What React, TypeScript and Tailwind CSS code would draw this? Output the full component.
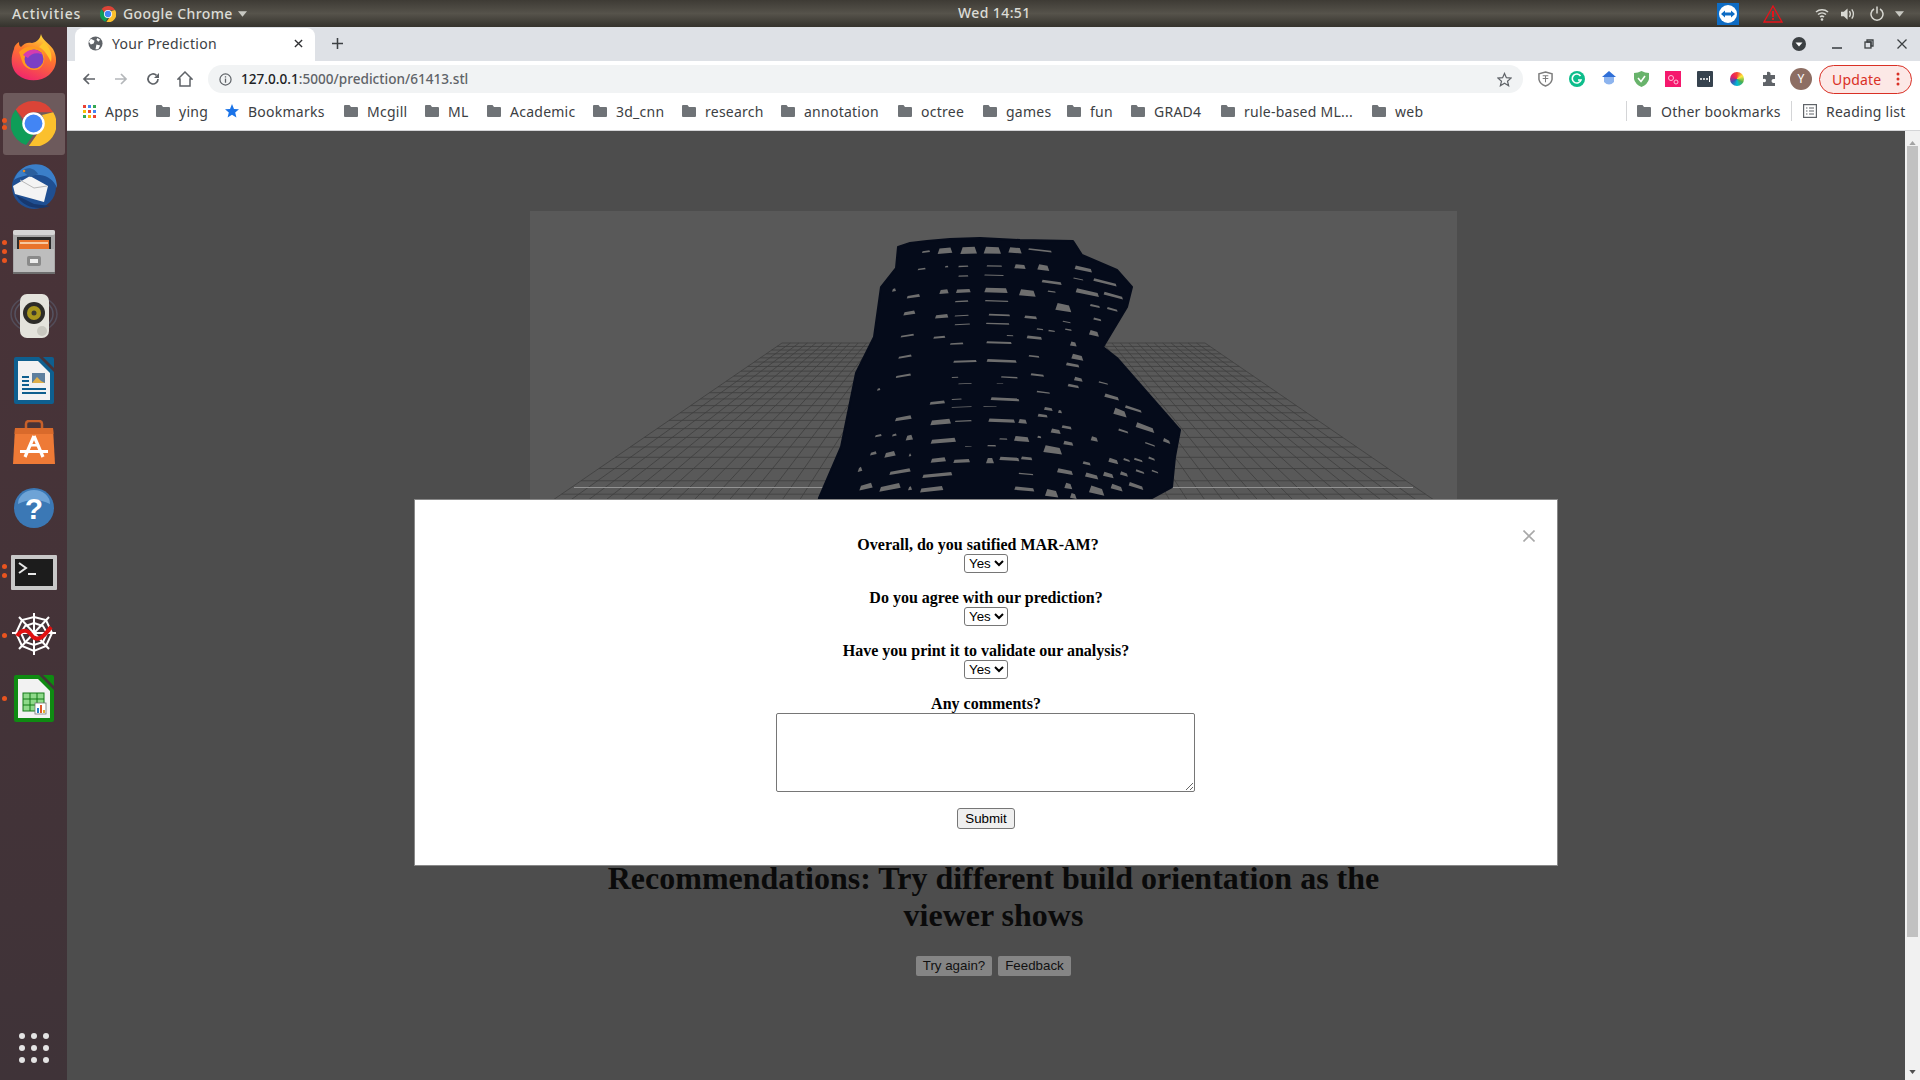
const uiFont = { fontFamily: '"Noto Sans", sans-serif' };

// bookmark bar items, widths measured from the screenshot
const bookmarks = [
  { label: "ying", w: "w-[28px]", gap: "ml-[17px]" },
  { label: "Bookmarks", w: "w-[77px]", star: true, gap: "ml-[18px]" },
  { label: "Mcgill", w: "w-[41px]", gap: "ml-[19px]" },
  { label: "ML", w: "w-[21px]", gap: "ml-[17px]" },
  { label: "Academic", w: "w-[66px]", gap: "ml-[18px]" },
  { label: "3d_cnn", w: "w-[48px]", gap: "ml-[17px]" },
  { label: "research", w: "w-[58px]", gap: "ml-[18px]" },
  { label: "annotation", w: "w-[76px]", gap: "ml-[18px]" },
  { label: "octree", w: "w-[44px]", gap: "ml-[18px]" },
  { label: "games", w: "w-[44px]", gap: "ml-[18px]" },
  { label: "fun", w: "w-[24px]", gap: "ml-[17px]" },
  { label: "GRAD4", w: "w-[50px]", gap: "ml-[17px]" },
  { label: "rule-based ML...", w: "w-[111px]", gap: "ml-[17px]" },
  { label: "web", w: "w-[30px]", gap: "ml-[17px]" },
];

// gaps in the mesh, read off the viewer: cx, cy, w, h
const holes = [
  [228,65,24,5],[285,62,44,16],[356,61,50,20],[427,61,52,20],[495,61,40,16],[570,61,70,5],
  [215,117,24,5],[290,110,10,4],[340,109,30,4],[433,108,46,4],[510,110,34,12],[580,113,36,16],[700,117,52,10],
  [340,138,30,4],[432,136,58,3],[605,157,60,8],[685,147,30,3],[765,157,70,8],
  [132,180,12,8],[190,199,40,8],[282,185,28,12],[340,183,44,10],[438,181,70,14],[532,189,50,18],[605,185,24,4],[712,188,70,12],[790,197,58,8],
  [335,214,40,4],[440,213,70,4],[640,233,48,20],[735,228,30,6],[787,238,32,6],
  [178,249,36,10],[275,259,40,10],[335,257,42,3],[448,255,64,5],[542,262,38,8],
  [337,283,46,3],[443,281,70,4],[650,276,24,3],[742,268,24,6],
  [570,298,20,4],[605,303,20,4],[655,299,20,4],[732,310,30,14],
  [172,317,40,5],[268,322,36,6],[480,317,20,3],[553,323,46,8],
  [320,341,40,5],[447,338,76,6],[670,342,20,12],
  [165,380,40,6],[345,394,70,6],[455,393,90,8],[552,379,32,5],[682,382,36,14],[668,405,40,8],
  [160,437,46,6],[315,442,20,3],[478,442,50,4],[562,435,40,6],[670,468,34,8],[685,448,26,10],
  [345,461,40,2],[450,461,20,2],[760,459,28,4],
  [86,478,10,6],[262,518,46,8],[320,508,30,3],[465,508,86,8],[580,487,40,4],
  [335,531,60,2],[420,530,40,2],[595,537,26,8],[785,501,44,10],[850,537,50,8],[810,548,40,18],
  [160,565,50,10],[272,576,62,14],[340,573,50,4],[455,572,80,10],[518,574,26,12],[578,557,30,8],[630,545,12,8],
  [85,617,20,6],[133,615,14,6],[178,623,22,14],[280,632,76,12],[460,627,24,4],[515,627,46,14],[568,621,12,6],[617,604,30,12],[650,592,30,8],[733,627,22,12],[885,593,56,14],[820,603,30,6],
  [355,649,20,2],[425,647,26,4],[608,660,56,20],[655,640,30,10],
  [120,673,34,14],[70,670,20,8],[180,675,8,8],[265,690,46,12],[335,693,50,10],[420,692,24,16],[478,687,60,10],[530,685,34,8],[710,700,24,8],[790,693,30,12],[830,690,20,6],[865,690,26,6],[905,686,20,6],[950,633,22,10],[900,643,30,4],
  [30,718,14,12],[150,725,64,10],[262,735,90,10],[528,732,44,4],[645,725,48,12],[725,738,40,12],[775,735,32,12],[822,732,24,10],[870,725,26,6],[915,725,20,4],
  [48,770,40,14],[120,772,64,14],[180,775,12,10],[245,778,70,12],[523,777,60,10],[605,790,40,20],[655,768,24,16],[670,798,20,14],[740,782,46,20],[800,773,36,14],[858,768,44,10],
];

function holePoints([cx, cy, w, h]: number[]) {
  const slope = (cx - 400) / 1500;
  const dy = (slope * w) / 2;
  const t = h * 0.35;
  return [
    [cx - w / 2 + t, cy - dy - h / 2],
    [cx + w / 2 - t, cy + dy - h / 2],
    [cx + w / 2, cy + dy + h / 2],
    [cx - w / 2, cy - dy + h / 2],
  ]
    .map((p) => p.join(","))
    .join(" ");
}

function Viewer() {
  const vy = 198;
  const cx = 993.5;
  const k = 211.5 / (343 - vy);
  const bottom = 620;
  const rows = [];
  for (let i = 0; i <= 45; i++) {
    const y = vy + 1 / (1 / (343 - vy) - i * 0.00016);
    if (y > 0 && y < bottom) rows.push(y);
  }
  const cols = [];
  for (let i = -25; i <= 25; i++) cols.push(i / 25);
  return (
    <svg viewBox="530 211 927 620" className="block w-full h-full">
      {rows.map((y, i) => (
        <line key={i} x1={cx - (y - vy) * k} x2={cx + (y - vy) * k} y1={y} y2={y} stroke="#3f3f3f" strokeWidth="0.8" />
      ))}
      {cols.map((c, i) => (
        <line key={i} x1={cx + c * 211.5} y1={343} x2={cx + c * (bottom - vy) * k} y2={bottom} stroke="#3f3f3f" strokeWidth="0.8" />
      ))}
      <line x1="574" x2="1413" y1="487.5" y2="487.5" stroke="#929292" strokeWidth="1" />
      <path
        d="M898 247 L910 243 L927 241 L950 239 L980 238 L1020 240 L1073 241 L1082 255 L1117 270 L1132 287 L1127 307 L1103 347 L1117 358 L1180 430 L1175 457 L1172 487 L1150 499 L1150 620 L819 620 L819 498 L841 447 L856 373 L874 337 L881 287 L896 268 Z"
        fill="#050b1a"
        stroke="#050b1a"
        strokeWidth="2"
        strokeLinejoin="round"
      />
      <g transform="translate(850 230) scale(0.3333)">
        {holes.map((h, i) => (
          <polygon key={i} points={holePoints(h)} fill="#6e6e6e" />
        ))}
      </g>
    </svg>
  );
}

function Firefox() {
  return (
    <svg viewBox="0 0 46 47" className="w-[46px] h-[47px]">
      <defs>
        <linearGradient id="ff" x1="0.7" y1="0" x2="0.3" y2="1">
          <stop offset="0" stopColor="#ffe03a" />
          <stop offset="0.4" stopColor="#ff7a2b" />
          <stop offset="1" stopColor="#f0246e" />
        </linearGradient>
      </defs>
      <path d="M30 0 C31 6 38 9 42 15 C47 24 46 34 38 41 C30 48 15 48 7 41 C0 35 -1 25 3 15 C3 12 5 10 8 8 C8 10 8 12 10 13 C13 9 17 8 21 9 C26 8 29 5 30 0 Z" fill="url(#ff)" />
      <path d="M33 8 C38 12 42 20 40 28 C37 22 34 16 28 13 Z" fill="#ffc52c" />
      <path d="M8 18 C14 12 22 11 29 15 C35 20 35 30 28 35 C21 38 13 34 11 27 Z" fill="#ff9a1f" />
      <circle cx="23" cy="25" r="9.5" fill="#7b3fc4" />
      <path d="M12 21 C17 14 28 14 32 21 C27 18 20 19 17 24 Z" fill="#d43cb0" />
    </svg>
  );
}

function ChromeLogo({ size }: { size: string }) {
  return (
    <svg viewBox="0 0 48 48" className={size}>
      <path d="M24 0 A24 24 0 0 1 45 12 L24 12 A12 12 0 0 0 13 19 L5 9 A24 24 0 0 1 24 0 Z" fill="#db4437" />
      <path d="M5 9 L17 31 A12 12 0 0 0 24 36 L16 47 A24 24 0 0 1 5 9 Z" fill="#0f9d58" />
      <path d="M45 12 A24 24 0 0 1 19 48 L31 31 A12 12 0 0 0 33 15 Z" fill="#fbc02d" />
      <circle cx="24" cy="24" r="12" fill="#fff" />
      <circle cx="24" cy="24" r="9.5" fill="#4285f4" />
    </svg>
  );
}

function Thunderbird() {
  return (
    <svg viewBox="0 0 48 48" className="w-[48px] h-[48px]">
      <circle cx="24" cy="25" r="22" fill="#1f4f92" />
      <path d="M4 18 C8 6 20 0 32 3 C42 6 47 16 47 26 C44 18 38 14 30 13 C20 12 10 14 4 18 Z" fill="#3b7fc9" />
      <path d="M3 24 L20 14 L38 24 L34 40 L5 32 Z" fill="#f4f4f4" />
      <path d="M10 18 L24 26 L37 24" fill="none" stroke="#b8b8b8" strokeWidth="1" />
      <path d="M12 9 C17 4 25 6 28 12 L20 15 Z" fill="#2a5f9e" />
      <circle cx="14" cy="9" r="1.3" fill="#e08a2a" />
      <path d="M6 33 L24 42 L40 44 C30 48 14 47 6 33 Z" fill="#17386e" />
    </svg>
  );
}

function Cabinet() {
  return (
    <svg viewBox="0 0 42 44" className="w-[42px] h-[44px]">
      <rect x="0" y="0" width="42" height="44" rx="2" fill="#a8a8a8" />
      <rect x="0" y="0" width="42" height="5" rx="2" fill="#d6d6d6" />
      <rect x="4" y="7" width="34" height="12" fill="#2c2c2c" />
      <rect x="6" y="10" width="30" height="9" fill="#e9742b" />
      <rect x="7" y="12" width="28" height="2" fill="#f6c9a0" />
      <rect x="1" y="19" width="40" height="23" fill="#bdbdbd" />
      <rect x="14" y="26" width="14" height="10" rx="2" fill="#8a8a8a" />
      <rect x="17" y="29" width="8" height="4" fill="#ededed" />
      <rect x="0" y="42" width="42" height="2" fill="#6e6e6e" />
    </svg>
  );
}

function Speaker() {
  return (
    <svg viewBox="0 0 48 44" className="w-[48px] h-[44px]">
      <ellipse cx="24" cy="20" rx="23" ry="18" fill="none" stroke="#5a5f72" strokeWidth="1.5" opacity="0.6" />
      <ellipse cx="24" cy="20" rx="19" ry="15" fill="none" stroke="#5a5f72" strokeWidth="1.5" opacity="0.7" />
      <rect x="10" y="0" width="29" height="44" rx="7" fill="#e4e3dc" />
      <circle cx="24" cy="19" r="11" fill="#2d2c28" />
      <circle cx="24" cy="19" r="7" fill="#a8961c" />
      <circle cx="24" cy="19" r="2.5" fill="#3a3a30" />
      <circle cx="32" cy="37" r="5" fill="#c9c8c0" />
    </svg>
  );
}

function DocIcon({ dark, children }: { dark: string; children: React.ReactNode }) {
  return (
    <svg viewBox="0 0 40 47" className="w-[40px] h-[47px]">
      <path d="M2 0 H25 L40 15 V45 Q40 47 38 47 H2 Q0 47 0 45 V2 Q0 0 2 0 Z" fill={dark} />
      <path d="M4 4 H24 L36 16 V43 H4 Z" fill="#f2f2f2" />
      <path d="M29 0 H38 Q40 0 40 2 V11 Z" fill={dark} />
      {children}
    </svg>
  );
}

function Bag() {
  return (
    <svg viewBox="0 0 42 44" className="w-[42px] h-[44px]">
      <path d="M13 9 V4 Q13 1 16 1 H26 Q29 1 29 4 V9" fill="none" stroke="#c7602a" strokeWidth="2.5" />
      <path d="M2 8 H40 L42 44 H0 Z" fill="#ee7a36" />
      <path d="M2 8 H40 L40.5 14 H1.5 Z" fill="#d96a2b" />
      <path d="M21 16 L30 37 M21 16 L12 37" stroke="#fff" strokeWidth="3.2" fill="none" />
      <rect x="7" y="30" width="28" height="3" fill="#fff" />
      <rect x="16" y="24" width="10" height="2.5" fill="#fff" />
    </svg>
  );
}

function Help() {
  return (
    <svg viewBox="0 0 40 40" className="w-[40px] h-[40px]">
      <circle cx="20" cy="20" r="20" fill="#3b78b5" />
      <path d="M4 16 A16 14 0 0 1 36 16 Q20 8 4 16 Z" fill="#6ea3d6" />
      <text x="20" y="31" textAnchor="middle" fontSize="30" fontWeight="700" fill="#fff" fontFamily="Liberation Sans, sans-serif">?</text>
    </svg>
  );
}

function Terminal() {
  return (
    <svg viewBox="0 0 46 35" className="w-[46px] h-[35px]">
      <rect width="46" height="35" rx="1" fill="#c8c8c8" />
      <rect x="4" y="4" width="38" height="27" fill="#1c1c1c" />
      <path d="M8 8 L15 13 L8 18" fill="none" stroke="#e8e8e8" strokeWidth="2" />
      <rect x="17" y="18" width="8" height="2" fill="#e8e8e8" />
    </svg>
  );
}

function Web() {
  const pts = [[23,2],[38,6],[45,22],[38,38],[23,44],[8,38],[1,22],[8,6]];
  const inner = [[23,12],[32,15],[36,22],[32,31],[23,34],[14,31],[10,22],[14,15]];
  return (
    <svg viewBox="0 0 46 46" className="w-[46px] h-[46px]">
      <g stroke="#fff" strokeWidth="2" fill="none">
        {pts.map((p, i) => (
          <line key={i} x1="23" y1="22" x2={p[0]} y2={p[1]} />
        ))}
        <polygon points={inner.map((p) => p.join(",")).join(" ")} />
        <polygon points="23,6 35,9 41,22 35,35 23,40 11,35 5,22 11,9" />
      </g>
      <path d="M6 25 C12 16 18 20 22 26 C28 31 34 24 40 16" fill="none" stroke="#e01010" strokeWidth="4" />
    </svg>
  );
}

function GlobeIcon() {
  return (
    <svg viewBox="0 0 16 16" className="w-[15px] h-[15px]">
      <circle cx="8" cy="8" r="7.5" fill="#5f6368" />
      <path d="M3 3 L7 5 L6 8 L3 9 L1 6 Z M9 9 L13 10 L11 14 L8 14 Z M10 2 L13 4 L11 6 L9 4 Z" fill="#fff" />
    </svg>
  );
}

function Folder({ color = "#6f7377" }: { color?: string }) {
  return (
    <svg viewBox="0 0 14 12" className="w-[14px] h-[12px] shrink-0">
      <path d="M1 0 H5.5 L7 2 H13 Q14 2 14 3 V11 Q14 12 13 12 H1 Q0 12 0 11 V1 Q0 0 1 0 Z" fill={color} />
    </svg>
  );
}

function AppsGrid() {
  const colors = ["#ea4335", "#4285f4", "#34a853", "#fbbc05", "#ea4335", "#4285f4", "#34a853", "#fbbc05", "#ea4335"];
  return (
    <div className="grid grid-cols-3 gap-[2px] w-[13px] shrink-0">
      {colors.map((c, i) => (
        <svg key={i} viewBox="0 0 3 3" className="w-[3px] h-[3px]">
          <rect width="3" height="3" fill={c} />
        </svg>
      ))}
    </div>
  );
}

function TopBar() {
  return (
    <div className="h-[27px] shrink-0 flex items-center bg-gradient-to-b from-[#3e3b35] via-[#56534b] to-[#35332d] text-[#dcdcd6] text-[14px] font-medium tracking-[0.4px] relative" style={uiFont}>
      <span className="ml-[12px] w-[88px] tracking-[0.9px]">Activities</span>
      <ChromeLogo size="w-[16px] h-[16px]" />
      <span className="ml-[7px] w-[109px] whitespace-nowrap">Google Chrome</span>
      <svg viewBox="0 0 10 6" className="w-[9px] h-[6px] ml-[6px]"><path d="M0 0 H10 L5 6 Z" fill="#c8c8c2" /></svg>
      <span className="absolute left-[958px] top-[2px] whitespace-nowrap">Wed 14:51</span>
      <div className="ml-auto flex items-center">
        <svg viewBox="0 0 22 22" className="w-[22px] h-[22px]">
          <rect width="22" height="22" fill="#0e6cc4" />
          <circle cx="11" cy="11" r="9" fill="#fff" />
          <path d="M4 11 L8 7.5 V9.5 H14 V7.5 L18 11 L14 14.5 V12.5 H8 V14.5 Z" fill="#0e6cc4" />
        </svg>
        <svg viewBox="0 0 20 18" className="w-[20px] h-[18px] ml-[24px]">
          <path d="M10 1 L19 17 H1 Z" fill="none" stroke="#e8121a" strokeWidth="1.3" />
          <rect x="9" y="6" width="2" height="6" fill="#e8121a" />
          <rect x="9" y="13" width="2" height="2" fill="#e8121a" />
        </svg>
        <svg viewBox="0 0 14 14" className="w-[14px] h-[14px] ml-[32px]">
          <path d="M1 5 A9 9 0 0 1 13 5 M3 7.5 A6 6 0 0 1 11 7.5 M5 10 A3 3 0 0 1 9 10" fill="none" stroke="#d8d8d2" strokeWidth="1.5" />
          <circle cx="7" cy="12.5" r="1.3" fill="#d8d8d2" />
        </svg>
        <svg viewBox="0 0 16 14" className="w-[15px] h-[14px] ml-[12px]">
          <path d="M0 4.5 H3 L7 1 V13 L3 9.5 H0 Z" fill="#d8d8d2" />
          <path d="M9 4 Q11 7 9 10 M11.5 2 Q15 7 11.5 12" fill="none" stroke="#d8d8d2" strokeWidth="1.4" />
        </svg>
        <svg viewBox="0 0 14 15" className="w-[14px] h-[15px] ml-[14px]">
          <path d="M4 3 A6 6 0 1 0 10 3" fill="none" stroke="#d8d8d2" strokeWidth="1.5" />
          <line x1="7" y1="0.5" x2="7" y2="7.5" stroke="#d8d8d2" strokeWidth="1.5" />
        </svg>
        <svg viewBox="0 0 10 6" className="w-[9px] h-[6px] ml-[11px] mr-[16px]"><path d="M0 0 H10 L5 6 Z" fill="#c8c8c2" /></svg>
      </div>
    </div>
  );
}

function Dock() {
  return (
    <div className="w-[67px] shrink-0 flex flex-col items-center bg-gradient-to-b from-[#4b3338] to-[#3f3338] relative">
      <div className="h-[55px] mt-[3px] flex items-center"><Firefox /></div>
      <div className="w-[62px] h-[62px] mt-[8px] pb-[2px] rounded-[3px] bg-[#6d5a5c] flex items-center justify-center"><ChromeLogo size="w-[45px] h-[45px]" /></div>
      <div className="mt-[7px]"><Thunderbird /></div>
      <div className="mt-[20px]"><Cabinet /></div>
      <div className="mt-[20px]"><Speaker /></div>
      <div className="mt-[19px]">
        <DocIcon dark="#0e5f8f">
          <path d="M8 20 H15 M8 24 H15 M8 28 H15 M8 32 H32 M8 36 H32" stroke="#0e5f8f" strokeWidth="2" />
          <rect x="18" y="16" width="13" height="10" fill="#5d7f9e" />
          <path d="M18 26 L23 20 L27 24 L31 26 Z" fill="#e0b04a" />
        </DocIcon>
      </div>
      <div className="mt-[16px]"><Bag /></div>
      <div className="mt-[24px]"><Help /></div>
      <div className="mt-[27px]"><Terminal /></div>
      <div className="mt-[21px]"><Web /></div>
      <div className="mt-[18px]">
        <DocIcon dark="#0f8a12">
          <rect x="9" y="18" width="21" height="18" fill="#8fd98a" stroke="#137a16" strokeWidth="1" />
          <path d="M9 24 H30 M9 30 H30 M16 18 V36 M23 18 V36" stroke="#137a16" strokeWidth="1" />
          <rect x="21" y="28" width="11" height="11" fill="#fff" stroke="#777" strokeWidth="0.8" />
          <rect x="23" y="33" width="2" height="5" fill="#2a7fc9" />
          <rect x="26" y="30" width="2" height="8" fill="#e0582a" />
          <rect x="29" y="35" width="2" height="3" fill="#e0b030" />
        </DocIcon>
      </div>
      <div className="mt-auto mb-[17px] grid grid-cols-3 gap-x-[6px] gap-y-[6px]">
        {[0, 1, 2, 3, 4, 5, 6, 7, 8].map((i) => (
          <div key={i} className="w-[6px] h-[6px] rounded-full bg-[#e4e4e4]" />
        ))}
      </div>
      {[[120], [127], [242], [251], [260], [566], [575], [635], [698]].map(([y]) => (
        <div key={y} className="absolute left-[2px] w-[5px] h-[5px] rounded-full bg-[#e9541f]" style={{ top: y - 27 - 2 }} />
      ))}
    </div>
  );
}

function TabStrip() {
  return (
    <div className="h-[34px] shrink-0 bg-[#dee1e6] flex items-end relative text-[#3c4043]" style={uiFont}>
      <div className="ml-[8px] w-[240px] h-[33px] bg-white rounded-t-[8px] flex items-center pl-[13px] pb-[3px]">
        <GlobeIcon />
        <span className="ml-[9px] text-[14px] tracking-[0.3px] w-[182px] whitespace-nowrap">Your Prediction</span>
        <svg viewBox="0 0 10 10" className="w-[9px] h-[9px]"><path d="M1 1 L9 9 M9 1 L1 9" stroke="#303134" strokeWidth="1.5" /></svg>
      </div>
      <svg viewBox="0 0 10 10" className="w-[11px] h-[11px] ml-[17px] mb-[12px]"><path d="M5 0 V10 M0 5 H10" stroke="#3c4043" strokeWidth="1.4" /></svg>
      <div className="ml-auto flex items-center h-full">
        <svg viewBox="0 0 14 14" className="w-[14px] h-[14px]">
          <circle cx="7" cy="7" r="7" fill="#3c4043" />
          <path d="M3.5 5.5 H10.5 L7 9.5 Z" fill="#fff" />
        </svg>
        <div className="w-[10px] h-[2px] bg-[#5f6368] ml-[26px] mt-[7px]" />
        <svg viewBox="0 0 10 10" className="w-[10px] h-[10px] ml-[22px]">
          <path d="M3 1 H9 V7 H7 V3 H3 Z" fill="none" stroke="#3c4043" strokeWidth="1.3" />
          <rect x="1" y="3" width="6" height="6" fill="none" stroke="#3c4043" strokeWidth="1.3" />
        </svg>
        <svg viewBox="0 0 10 10" className="w-[10px] h-[10px] ml-[23px] mr-[13px]"><path d="M0.5 0.5 L9.5 9.5 M9.5 0.5 L0.5 9.5" stroke="#3c4043" strokeWidth="1.3" /></svg>
      </div>
    </div>
  );
}

function Toolbar() {
  return (
    <div className="h-[36px] shrink-0 bg-white flex items-center relative" style={uiFont}>
      <svg viewBox="0 0 14 14" className="w-[14px] h-[14px] ml-[15px]"><path d="M13 7 H2 M7 2 L2 7 L7 12" fill="none" stroke="#5f6368" strokeWidth="1.7" /></svg>
      <svg viewBox="0 0 14 14" className="w-[14px] h-[14px] ml-[18px]"><path d="M1 7 H12 M7 2 L12 7 L7 12" fill="none" stroke="#b4b7ba" strokeWidth="1.7" /></svg>
      <svg viewBox="0 0 14 14" className="w-[14px] h-[14px] ml-[18px]">
        <path d="M12 7 A5 5 0 1 1 10.5 3.4" fill="none" stroke="#5f6368" strokeWidth="1.7" />
        <path d="M13 1 V6 H8 Z" fill="#5f6368" />
      </svg>
      <svg viewBox="0 0 16 16" className="w-[16px] h-[16px] ml-[17px]"><path d="M8 1 L15 8 H13 V15 H3 V8 H1 Z" fill="none" stroke="#5f6368" strokeWidth="1.5" /></svg>
      <div className="ml-[15px] w-[1315px] h-[28px] rounded-full bg-[#f1f3f4] flex items-center pl-[11px] pr-[11px]">
        <svg viewBox="0 0 14 14" className="w-[13px] h-[13px]">
          <circle cx="7" cy="7" r="6" fill="none" stroke="#5f6368" strokeWidth="1.3" />
          <rect x="6.3" y="6" width="1.4" height="4.5" fill="#5f6368" />
          <rect x="6.3" y="3.5" width="1.4" height="1.4" fill="#5f6368" />
        </svg>
        <span className="ml-[9px] text-[13.6px] text-[#5f6368] whitespace-nowrap font-medium"><span className="text-[#202124]">127.0.0.1</span>:5000/prediction/61413.stl</span>
        <svg viewBox="0 0 16 16" className="w-[15px] h-[15px] ml-auto"><path d="M8 1.5 L10 6 L15 6.5 L11.2 9.8 L12.4 14.6 L8 12 L3.6 14.6 L4.8 9.8 L1 6.5 L6 6 Z" fill="none" stroke="#5f6368" strokeWidth="1.3" /></svg>
      </div>
      <svg viewBox="0 0 16 17" className="w-[15px] h-[16px] ml-[15px]">
        <path d="M8 1 L15 3 V9 Q14 14 8 16 Q2 14 1 9 V3 Z" fill="none" stroke="#7d7d7d" strokeWidth="1.6" />
        <path d="M5 5 H11 M8 5 V12 M5 8 H11" stroke="#7d7d7d" strokeWidth="1.1" />
      </svg>
      <svg viewBox="0 0 16 16" className="w-[16px] h-[16px] ml-[16px]">
        <circle cx="8" cy="8" r="8" fill="#0dbd8b" />
        <path d="M11.5 5 A4.5 4.5 0 1 0 12 9 H9" fill="none" stroke="#fff" strokeWidth="1.6" />
      </svg>
      <svg viewBox="0 0 14 16" className="w-[14px] h-[16px] ml-[17px]">
        <path d="M7 0 L14 6 H0 Z" fill="#2f6fd8" />
        <path d="M2 6 H12 V11 Q7 16 2 11 Z" fill="#8db4ee" />
      </svg>
      <svg viewBox="0 0 15 16" className="w-[15px] h-[16px] ml-[18px]">
        <path d="M0 2 Q4 2 7.5 0 Q11 2 15 2 V8 Q14 13 7.5 16 Q1 13 0 8 Z" fill="#68b36b" />
        <path d="M4 7 L7 10.5 L11 5" fill="none" stroke="#fff" strokeWidth="1.6" />
      </svg>
      <svg viewBox="0 0 16 16" className="w-[16px] h-[16px] ml-[16px]">
        <rect width="16" height="16" fill="#f5186d" />
        <circle cx="6" cy="7" r="2.5" fill="none" stroke="#ffc2d9" strokeWidth="1" />
        <circle cx="11" cy="11" r="2" fill="none" stroke="#ffc2d9" strokeWidth="1" />
      </svg>
      <svg viewBox="0 0 16 16" className="w-[16px] h-[16px] ml-[16px]">
        <rect width="16" height="16" rx="1" fill="#36424e" />
        <circle cx="4" cy="8" r="1" fill="#fff" />
        <circle cx="7" cy="8" r="1" fill="#fff" />
        <circle cx="10" cy="8" r="1" fill="#fff" />
        <rect x="12" y="5" width="1" height="6" fill="#fff" />
      </svg>
      <div className="w-[14px] h-[14px] ml-[17px] rounded-full bg-[conic-gradient(#f44336,#ffeb3b,#4caf50,#00bcd4,#3f51b5,#e91e63,#f44336)]" />
      <svg viewBox="0 0 16 16" className="w-[16px] h-[16px] ml-[17px]">
        <path d="M6 1 Q8 0 9.5 2 V4 H14 V8 H12.5 Q10.5 8 10.5 10 Q10.5 12 12.5 12 H14 V15 H2 V11 Q5 12 5 9.5 Q5 7 2 8 V4 H6 Z" fill="#5f6368" />
      </svg>
      <div className="w-[22px] h-[22px] ml-[13px] rounded-full bg-[#8d6e63] text-white text-[12px] flex items-center justify-center">Y</div>
      <div className="w-[93px] h-[29px] ml-[7px] rounded-full border border-[#d93025] bg-[#fce8e6] flex items-center pl-[12px] text-[14px] tracking-[0.2px] text-[#d93025]">
        Update
        <svg viewBox="0 0 4 14" className="w-[4px] h-[14px] ml-[15px]">
          <circle cx="2" cy="2" r="1.5" fill="#d93025" />
          <circle cx="2" cy="7" r="1.5" fill="#d93025" />
          <circle cx="2" cy="12" r="1.5" fill="#d93025" />
        </svg>
      </div>
    </div>
  );
}

function BookmarksBar() {
  return (
    <div className="h-[34px] shrink-0 bg-white border-b border-[#d4d5d7] flex items-center pb-[5px] text-[14px] tracking-[0.25px] text-[#3c4043]" style={uiFont}>
      <div className="ml-[16px]"><AppsGrid /></div>
      <span className="ml-[9px] w-[34px]">Apps</span>
      {bookmarks.map((b) => (
        <div key={b.label} className={"flex items-center " + b.gap}>
          {b.star ? (
            <svg viewBox="0 0 14 14" className="w-[14px] h-[14px]"><path d="M7 0 L9 5 L14 5.3 L10.2 8.5 L11.4 13.5 L7 10.8 L2.6 13.5 L3.8 8.5 L0 5.3 L5 5 Z" fill="#1a73e8" /></svg>
          ) : (
            <Folder />
          )}
          <span className={"ml-[9px] whitespace-nowrap " + b.w}>{b.label}</span>
        </div>
      ))}
      <div className="ml-auto flex items-center">
        <div className="w-px h-[20px] bg-[#d4d5d7]" />
        <div className="ml-[10px]"><Folder /></div>
        <span className="ml-[10px] w-[119px] whitespace-nowrap">Other bookmarks</span>
        <div className="w-px h-[20px] bg-[#d4d5d7] ml-[11px]" />
        <svg viewBox="0 0 14 14" className="w-[14px] h-[14px] ml-[11px]">
          <rect x="0.6" y="0.6" width="12.8" height="12.8" fill="none" stroke="#5f6368" strokeWidth="1.2" />
          <path d="M3 4 H4.5 M6 4 H11 M3 7 H4.5 M6 7 H11 M3 10 H4.5 M6 10 H11" stroke="#5f6368" strokeWidth="1.2" />
        </svg>
        <span className="ml-[9px] mr-[15px] w-[79px] whitespace-nowrap">Reading list</span>
      </div>
    </div>
  );
}

function Question({ text, shift }: { text: string; shift?: boolean }) {
  const selectCls =
    "block mx-auto w-[44px] h-[19px] border border-[#767676] rounded-[3px] bg-white text-black text-[13.33px]";
  return (
    <div className="mb-[16px]">
      <div className={"h-[18px] leading-[18px] font-bold text-[16px] text-black " + (shift ? "mr-[16px]" : "")}>{text}</div>
      <select className={selectCls} style={{ fontFamily: '"Liberation Sans", sans-serif' }} defaultValue="Yes">
        <option>Yes</option>
        <option>No</option>
      </select>
    </div>
  );
}

function Modal() {
  return (
    <div className="absolute left-[347px] top-[368px] w-[1144px] h-[367px] bg-white border border-[#888888] pt-[36px] text-center" style={{ fontFamily: '"Liberation Serif", serif' }}>
      <button className="absolute right-[22px] top-[30px]">
        <svg viewBox="0 0 12 12" className="w-[12px] h-[12px] block"><path d="M0.5 0.5 L11.5 11.5 M11.5 0.5 L0.5 11.5" stroke="#a8a8a8" strokeWidth="1.6" /></svg>
      </button>
      <Question text="Overall, do you satified MAR-AM?" shift />
      <Question text="Do you agree with our prediction?" />
      <Question text="Have you print it to validate our analysis?" />
      <div className="h-[18px] leading-[18px] font-bold text-[16px] text-black">Any comments?</div>
      <textarea className="block ml-[361px] w-[419px] h-[79px] border border-[#767676] rounded-[2px] bg-white resize" />
      <button
        className="block mx-auto mt-[16px] w-[58px] h-[21px] border border-[#767676] rounded-[3px] bg-[#efefef] text-black text-[13.33px]"
        style={{ fontFamily: '"Liberation Sans", sans-serif' }}
      >
        Submit
      </button>
    </div>
  );
}

export default function App() {
  return (
    <div className="w-[1920px] h-[1080px] overflow-hidden flex flex-col">
      <TopBar />
      <div className="flex-1 flex min-h-0">
        <Dock />
        <div className="flex-1 flex flex-col min-w-0">
          <TabStrip />
          <Toolbar />
          <BookmarksBar />
          <div className="flex-1 flex min-h-0">
            <main className="flex-1 relative overflow-hidden bg-[#4d4d4d] flex flex-col items-center pl-[15px] pt-[80px]">
              <div className="w-[927px] h-[620px] shrink-0 bg-[#595959]">
                <Viewer />
              </div>
              <h1 className="w-[800px] mt-[29px] text-center font-bold text-[32px] leading-[37px] text-[#0a0a0a]" style={{ fontFamily: '"Liberation Serif", serif' }}>
                Recommendations: Try different build orientation as the viewer shows
              </h1>
              <div className="mt-[22px] flex gap-[6px] text-[13.33px] text-[#111111]" style={{ fontFamily: '"Liberation Sans", sans-serif' }}>
                <button className="w-[76px] h-[20px] rounded-[2px] bg-[#858585]">Try again?</button>
                <button className="w-[73px] h-[20px] rounded-[2px] bg-[#858585]">Feedback</button>
              </div>
              <Modal />
            </main>
            <div className="w-[15px] shrink-0 bg-[#f1f1f1] flex flex-col items-center">
              <svg viewBox="0 0 8 5" className="w-[7px] h-[4px] mt-[10px]"><path d="M4 0 L8 5 H0 Z" fill="#a3a3a3" /></svg>
              <div className="w-[11px] h-[791px] mt-[1px] bg-[#c1c1c1]" />
              <svg viewBox="0 0 8 5" className="w-[7px] h-[4px] mt-auto mb-[6px]"><path d="M4 5 L8 0 H0 Z" fill="#505050" /></svg>
            </div>
          </div>
        </div>
      </div>
    </div>
  );
}
